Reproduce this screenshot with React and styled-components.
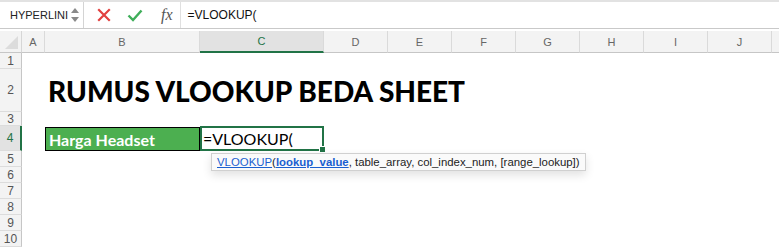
import React from "react";
import styled, { createGlobalStyle } from "styled-components";

const GlobalStyle = createGlobalStyle`
  html, body {
    margin: 0;
    padding: 0;
    background: #fff;
    width: 779px;
    height: 249px;
    overflow: hidden;
    font-family: "Liberation Sans", Arial, sans-serif;
  }
`;

const COLS = [
  { name: "A", w: 23 },
  { name: "B", w: 155 },
  { name: "C", w: 124 },
  { name: "D", w: 64 },
  { name: "E", w: 64 },
  { name: "F", w: 64 },
  { name: "G", w: 64 },
  { name: "H", w: 64 },
  { name: "I", w: 64 },
  { name: "J", w: 64 },
  { name: "", w: 64 },
];

const ROWS = [16, 43, 14, 25, 16, 16, 16, 16, 16, 16];

const Wrap = styled.div`
  width: 779px;
  height: 249px;
  overflow: hidden;
`;

const FormulaBar = styled.div`
  display: flex;
  align-items: center;
  height: 26px;
  border-top: 2px solid #e2e2e2;
  border-bottom: 1px solid #c9c9c9;
  background: #fff;
`;

const NameBox = styled.div`
  width: 84px;
  height: 100%;
  box-sizing: border-box;
  display: flex;
  align-items: center;
  justify-content: space-between;
  padding: 0 4px 0 10px;
  border-right: 1px solid #d4d4d4;
  font-size: 11px;
  color: #222;
`;

const Stepper = styled.div`
  display: flex;
  flex-direction: column;
  gap: 4px;
`;

const Arrow = styled.span`
  width: 0;
  height: 0;
  border-left: 4px solid transparent;
  border-right: 4px solid transparent;
  ${(p) => (p.down ? "border-top: 5px solid #8a8a8a;" : "border-bottom: 5px solid #8a8a8a;")}
`;

const Tools = styled.div`
  display: flex;
  align-items: center;
  gap: 16px;
  padding: 0 7px 0 13px;
  height: 100%;
  border-right: 1px solid #e0e0e0;
`;

const Fx = styled.span`
  font-family: "Liberation Serif", "DejaVu Serif", serif;
  font-style: italic;
  font-size: 16px;
  color: #555;
  margin-left: 2px;
`;

const FormulaText = styled.div`
  padding-left: 7px;
  font-size: 12px;
  color: #111;
`;

const Gap = styled.div`
  height: 2px;
  background: #fff;
`;

const Sheet = styled.div`
  display: grid;
  background: #fff;
  grid-template-columns: 22px ${COLS.map((c) => c.w + "px").join(" ")};
  grid-template-rows: 22px ${ROWS.map((r) => r + "px").join(" ")};
`;

const Corner = styled.div`
  position: relative;
  background: #f3f3f3;
  border-right: 1px solid #d6d6d6;
  border-bottom: 1px solid #c6c6c6;
  &::after {
    content: "";
    position: absolute;
    right: 3px;
    bottom: 3px;
    border-left: 13px solid transparent;
    border-bottom: 13px solid #dcdcdc;
  }
`;

const ColHead = styled.div`
  display: flex;
  align-items: center;
  justify-content: center;
  font-size: 11px;
  background: ${(p) => (p.active ? "#e2e2e2" : "#f3f3f3")};
  color: ${(p) => (p.active ? "#217346" : "#666")};
  border-right: 1px solid #dadada;
  border-bottom: ${(p) => (p.active ? "2px solid #217346" : "1px solid #c6c6c6")};
  box-sizing: border-box;
`;

const RowHead = styled.div`
  display: flex;
  align-items: center;
  justify-content: center;
  font-size: 12px;
  color: ${(p) => (p.active ? "#217346" : "#555")};
  background: ${(p) => (p.active ? "#e2e2e2" : "#f3f3f3")};
  border-bottom: 1px solid #dcdcdc;
  border-right: ${(p) => (p.active ? "2px solid #217346" : "1px solid #c6c6c6")};
  box-sizing: border-box;
`;

const Cell = styled.div`
  position: relative;
  min-width: 0;
`;

const Title = styled.div`
  position: absolute;
  left: 3px;
  bottom: 7px;
  z-index: 1;
  white-space: nowrap;
  font-family: Lato, "Open Sans", sans-serif;
  font-weight: 900;
  font-size: 28px;
  color: #000;
  line-height: 1;
`;

const LabelCell = styled.div`
  background: #4caf50;
  border: 1px solid #000;
  display: flex;
  align-items: center;
  padding-left: 3px;
  margin-top: 1px;
  font-family: Lato, "Open Sans", sans-serif;
  font-weight: 700;
  font-size: 16px;
  color: #fff;
`;

const ActiveCell = styled.div`
  position: relative;
  border: 2px solid #217346;
  display: flex;
  align-items: center;
  padding-left: 1px;
  font-family: Lato, "Open Sans", sans-serif;
  font-size: 16px;
  color: #000;
  &::after {
    content: "";
    position: absolute;
    right: -4px;
    bottom: -4px;
    width: 5px;
    height: 5px;
    background: #217346;
    border: 1px solid #fff;
  }
`;

const Tip = styled.div`
  position: absolute;
  left: 211px;
  top: 153px;
  height: 18px;
  box-sizing: border-box;
  display: flex;
  align-items: center;
  padding: 0 5px;
  background: #fafafa;
  border: 1px solid #d0d0d0;
  box-shadow: 0 4px 10px rgba(0, 0, 0, 0.12);
  font-family: "Liberation Sans", Arial, sans-serif;
  font-size: 11.4px;
  color: #222;
  white-space: nowrap;
  z-index: 2;
`;

const Link = styled.span`
  color: #1a5fd0;
  text-decoration: underline;
  font-weight: ${(p) => (p.bold ? 700 : 400)};
`;

const Stage = styled.div`
  position: relative;
`;

const XIcon = () => (
  <svg width="14" height="14" viewBox="0 0 14 14">
    <path d="M2 2 L12 12 M12 2 L2 12" stroke="#e2403f" strokeWidth="2.2" strokeLinecap="square" />
  </svg>
);

const CheckIcon = () => (
  <svg width="16" height="13" viewBox="0 0 16 13">
    <path d="M1.5 6.5 L6 11 L14.5 1.5" stroke="#3fae5a" strokeWidth="2.4" fill="none" />
  </svg>
);

const App = () => {
  return (
    <Stage>
      <GlobalStyle />
      <Wrap>
        <FormulaBar>
          <NameBox>
            <span>HYPERLINI</span>
            <Stepper>
              <Arrow />
              <Arrow down />
            </Stepper>
          </NameBox>
          <Tools>
            <XIcon />
            <CheckIcon />
            <Fx>fx</Fx>
          </Tools>
          <FormulaText>=VLOOKUP(</FormulaText>
        </FormulaBar>
        <Gap />
        <Sheet>
          <Corner />
          {COLS.map((c, ci) => (
            <ColHead key={ci} active={c.name === "C"}>
              {c.name}
            </ColHead>
          ))}
          {ROWS.map((h, ri) => {
            const r = ri + 1;
            return (
              <React.Fragment key={r}>
                <RowHead active={r === 4}>{r}</RowHead>
                {COLS.map((c, ci) => {
                  if (r === 4 && c.name === "B") {
                    return <LabelCell key={ci}>Harga Headset</LabelCell>;
                  }
                  if (r === 4 && c.name === "C") {
                    return <ActiveCell key={ci}>=VLOOKUP(</ActiveCell>;
                  }
                  return (
                    <Cell key={ci}>
                      {r === 2 && c.name === "B" && <Title>RUMUS VLOOKUP BEDA SHEET</Title>}
                    </Cell>
                  );
                })}
              </React.Fragment>
            );
          })}
        </Sheet>
      </Wrap>
      <Tip>
        <Link>VLOOKUP</Link>(<Link bold>lookup_value</Link>, table_array, col_index_num, [range_lookup])
      </Tip>
    </Stage>
  );
};

export default App;
